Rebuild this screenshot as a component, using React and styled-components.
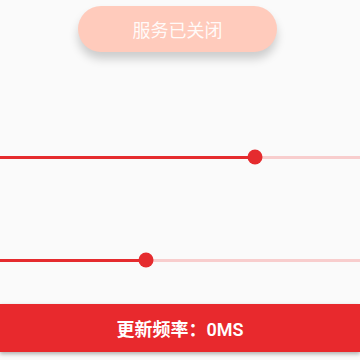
import React from 'react';
import styled, { createGlobalStyle } from 'styled-components';

const GlobalStyle = createGlobalStyle`
  html, body {
    margin: 0;
    padding: 0;
    background: #fafafa;
    font-family: Roboto, "Noto Sans CJK SC", sans-serif;
  }
`;

const Page = styled.div`
  width: 360px;
  height: 360px;
  overflow: hidden;
  display: flex;
  flex-direction: column;
  align-items: stretch;
  padding-top: 6px;
  box-sizing: border-box;
`;

const ToggleButton = styled.button`
  align-self: flex-start;
  margin-left: 78px;
  width: 199px;
  height: 46px;
  border: none;
  border-radius: 23px;
  background: #ffcbbc;
  color: rgba(255, 255, 255, 0.92);
  font-family: Roboto, "Noto Sans CJK SC", sans-serif;
  font-size: 18px;
  box-shadow: 0 7px 10px rgba(0, 0, 0, 0.18);
`;

const SliderRow = styled.div`
  position: relative;
  height: 16px;
  margin-top: ${p => p.$gap}px;
  display: flex;
  align-items: center;
`;

const Track = styled.div`
  position: relative;
  width: 100%;
  height: 3px;
  background: #f8cdcd;
`;

const Fill = styled.div`
  height: 100%;
  background: #e52b2e;
`;

const Thumb = styled.div`
  position: absolute;
  top: 50%;
  width: 15px;
  height: 15px;
  border-radius: 50%;
  background: #e52b2e;
  transform: translate(-50%, -50%);
`;

const Slider = ({ value, gap }) => (
  <SliderRow $gap={gap}>
    <Track>
      <Fill style={{ width: `${value}%` }} />
      <Thumb style={{ left: `${value}%` }} />
    </Track>
  </SliderRow>
);

const RateBar = styled.div`
  margin-top: 36px;
  height: 48px;
  background: #e8292d;
  color: #fff;
  font-size: 18px;
  font-weight: 600;
  display: flex;
  align-items: center;
  justify-content: center;
  box-shadow: 0 2px 4px rgba(0, 0, 0, 0.3);
`;

export default function App() {
  return (
    <>
      <GlobalStyle />
      <Page>
        <ToggleButton>服务已关闭</ToggleButton>
        <Slider value={70.8} gap={97} />
        <Slider value={40.6} gap={87} />
        <RateBar>更新频率：0MS</RateBar>
      </Page>
    </>
  );
}
